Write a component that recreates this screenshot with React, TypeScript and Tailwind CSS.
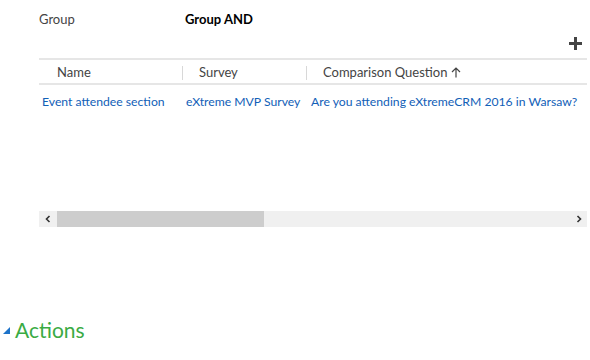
import React from "react";

export default function App() {
  const font = { fontFamily: 'Lato, Roboto, "Liberation Sans", sans-serif' };
  return (
    <div className="w-[590px] h-[360px] bg-white relative overflow-hidden" style={font}>
      <div className="pl-[39px] pr-[3px] pt-[11px]">
        <div className="flex items-center h-[18px] text-[13px]">
          <div className="w-[146px] text-[#444]">Group</div>
          <div className="font-bold text-black">Group AND</div>
        </div>
        <div className="flex justify-end h-[29px] items-center pr-[5px]">
          <svg width="13" height="13" viewBox="0 0 13 13">
            <rect x="5" y="0" width="3" height="13" fill="#444" />
            <rect x="0" y="5" width="13" height="3" fill="#444" />
          </svg>
        </div>
        <div className="border-t-2 border-[#e6e6e6]">
          <div className="flex items-center h-[25px] pt-[2px] border-b-2 border-[#e6e6e6] text-[13px] text-[#444]">
            <div className="w-[144px] shrink-0 pl-[18px] border-r border-[#d8d8d8] h-[14px] flex items-center">Name</div>
            <div className="w-[124px] shrink-0 pl-[16px] border-r border-[#d8d8d8] h-[14px] flex items-center">Survey</div>
            <div className="pl-[16px] flex items-center gap-[4px]">
              Comparison Question
              <svg width="10" height="11" viewBox="0 0 10 11">
                <path d="M5 10.5V1M1 5L5 1L9 5" stroke="#444" strokeWidth="1.2" fill="none" />
              </svg>
            </div>
          </div>
          <div className="flex items-center h-[34px] text-[12.2px] text-[#1160b7] whitespace-nowrap">
            <div className="w-[147px] shrink-0 pl-[3px]">Event attendee section</div>
            <div className="w-[125px] shrink-0">eXtreme MVP Survey</div>
            <div>Are you attending eXtremeCRM 2016 in Warsaw?</div>
          </div>
        </div>
        <div className="h-[92px]" />
        <div className="flex h-[16px] bg-[#f0f0f0] w-[548px]">
          <div className="w-[17px] flex items-center justify-center">
            <svg width="6" height="8" viewBox="0 0 6 8">
              <path d="M4.5 1L1.5 4L4.5 7" stroke="#333" strokeWidth="1.6" fill="none" />
            </svg>
          </div>
          <div className="w-[207px] bg-[#cdcdcd] ml-[1px]" />
          <div className="flex-1" />
          <div className="w-[17px] flex items-center justify-center">
            <svg width="6" height="8" viewBox="0 0 6 8">
              <path d="M1.5 1L4.5 4L1.5 7" stroke="#333" strokeWidth="1.6" fill="none" />
            </svg>
          </div>
        </div>
      </div>
      <div className="flex items-center mt-[92px] pl-[3px]">
        <svg width="8" height="8" viewBox="0 0 8 8" className="mt-[2px]">
          <polygon points="7,0 7,7 0,7" fill="#1d73c9" />
        </svg>
        <div className="ml-[4px] text-[21px] text-[#3aab44] leading-none">Actions</div>
      </div>
    </div>
  );
}
